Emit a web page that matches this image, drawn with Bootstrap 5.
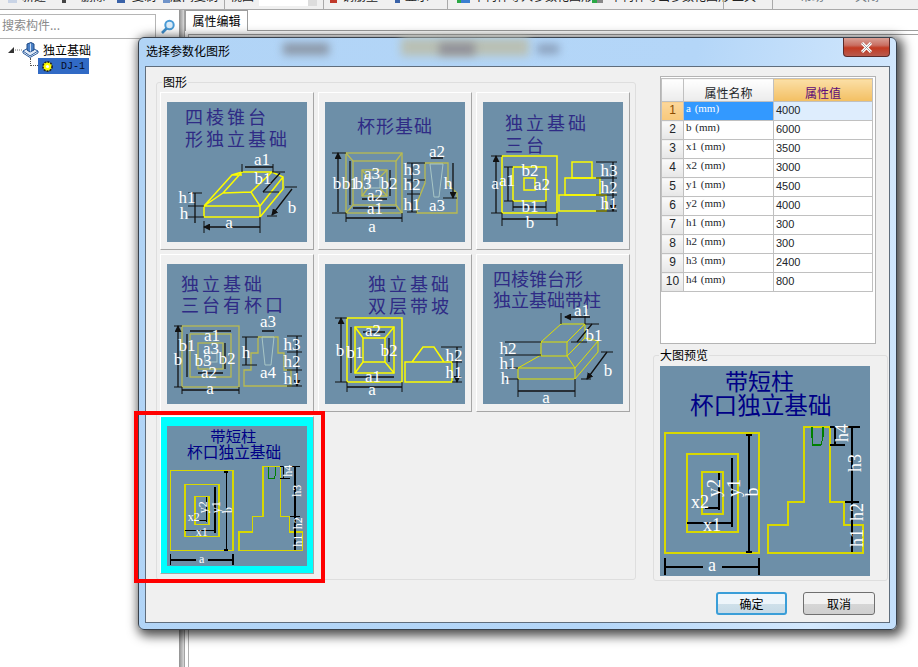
<!DOCTYPE html>
<html lang="zh">

<head>
  <meta charset="UTF-8">
  <title>选择参数化图形</title>
  <link href="https://cdn.jsdelivr.net/npm/bootstrap@5.3.2/dist/css/bootstrap.min.css" rel="stylesheet" />
  <style>
    html, body { height: 100%; overflow: hidden; background: #fff; }
    body { font: 12px "Noto Sans CJK SC", "Liberation Sans", sans-serif; color: #000; }
    .app { height: 667px; }

    /* toolbar, only its lower edge is in the shot */
    .tbar { height: 10px; background: #f0f0f0; border-bottom: 1px solid #a9a9a9; overflow: hidden; align-items: flex-end; }
    .tb-txt { flex: none; height: 22px; line-height: 18px; padding-bottom: 4px; color: #222; white-space: nowrap; }
    .tb-sep { flex: none; height: 9px; background: #aaa; }
    .tb-combo { flex: none; height: 6px; background: #fff; align-self: flex-start; }
    .tb-ico { flex: none; height: 3px; align-self: flex-start; }

    .left-pane { width: 179px; flex: none; }
    .search-row { height: 32px; padding-top: 4px; }
    .search-box { width: 156px; height: 25px; border: 1px solid #b5b5b5; border-left: 0; background: #fff; color: #8a8a8a; padding-left: 2px; line-height: 20px; }
    .search-ico { margin-left: 4px; margin-top: 5px; }
    .tree-row { height: 16px; line-height: 16px; white-space: nowrap; }
    .tree-sel { background: #316ac5; width: 51px; height: 16px; padding-left: 3px; gap: 3px; font: 10px "Liberation Mono", monospace; color: #050a20; }
    .tree-link { width: 8px; height: 8px; border-left: 1px dotted #555; border-bottom: 1px dotted #555; margin: 0 0 8px 30px; }
    .gutter { width: 5px; flex: none; background: linear-gradient(90deg, #8f8f8f, #d8d8d8); }
    .right-pane { border-left: 1px solid #a3a3a3; }
    .tab-strip { height: 21px; border-bottom: 1px solid #9d9d9d; }
    .tab-one { width: 63px; height: 21px; border: 1px solid #9d9d9d; border-bottom: 0; background: #fff; text-align: center; line-height: 20px; }
    .sub-line { margin: 3px 0 0 3px; border-top: 1px solid #a0a0a0; border-left: 1px solid #b0b0b0; }

    /* dialog */
    .dlg { left: 138px; top: 37px; width: 759px; height: 593px; border: 1px solid #39424d; border-radius: 6px; background: linear-gradient(100deg, #b1d4f6 0%, #b4d6f8 65%, #d3e8fd 90%, #c3dffb 100%); box-shadow: 3px 3px 11px 3px rgba(0, 0, 0, .7); }
    .dlg-title { height: 28px; line-height: 26px; padding-left: 7px; }
    .blob { position: absolute; filter: blur(4px); }
    .dlg-close { top: 0; right: 6px; width: 47px; height: 19px; border: 1px solid #5b2a2a; border-top: 0; border-radius: 0 0 4px 4px; background: linear-gradient(#d9a096 0%, #c96f62 40%, #c23a22 55%, #b85a4e 100%); }
    .dlg-client { margin: 0 6px; height: 557px; background: #f0f0f0; border: 1px solid #5f6d7c; }
    .grp { position: relative; border: 1px solid #dedede; border-radius: 3px; }
    .grp-label { position: absolute; left: 5px; top: -9px; background: #f0f0f0; padding: 0 1px; line-height: 16px; }
    .shapes { width: 480px; height: 498px; margin: 15px 0 0 10px; padding: 9px 0 0 3px; display: grid; grid-template-columns: repeat(3, 154px); grid-auto-rows: 158px; gap: 4px; }
    .shape-cell { padding: 9px 0 0 6px; background: #f0f0f0; border: 1px solid; border-color: #fff #a6a6a6 #a6a6a6 #fff; }
    .shape-on { background: #0ff; }
    .pic { display: block; background: #6d8fa8; }
    .side { width: 235px; margin: 9px 0 0 17px; }
    .prop-box { width: 216px; height: 268px; margin-left: 7px; background: #fff; border: 1px solid #b4b4b4; padding-top: 1px; }
    .prop-tb { width: 211px; table-layout: fixed; margin: 0; border-color: #c0c0c0; }
    .prop-tb th, .prop-tb td { padding: 0 2px; height: 19px; line-height: 17px; font-weight: 400; border: 1px solid #c0c0c0; }
    .prop-tb thead th { height: 23px; text-align: center; background: linear-gradient(#fff, #ebebeb); }
    .prop-tb .th-val { background: linear-gradient(#fbdfa6, #f3bf62); color: #5c0a78; }
    .prop-tb .rn { text-align: center; padding: 0; background: linear-gradient(#fafafa, #e6e6e6); font-family: "Liberation Sans", sans-serif; }
    .prop-tb .rn-on { background: linear-gradient(#fcd79b, #f8c87a); color: #8a4b00; }
    .prop-tb .nm { font: 11px "Liberation Serif", serif; word-spacing: 1px; }
    .prop-tb .vl { font: 11px "Liberation Sans", sans-serif; line-height: 17px; }
    .prop-tb .nm-on { background: #39f; color: #fff; }
    .prop-tb .vl-on { background: #deedfd; }
    .preview { height: 226px; margin-top: 11px; padding: 10px 0 0 6px; }
    .dlg-foot { margin-top: 11px; padding-right: 14px; gap: 16px; }
    .btn-aero { width: 72px; height: 23px; padding: 0; font-size: 12px; line-height: 20px; border-radius: 3px; border: 1px solid #707070; background: linear-gradient(#f2f2f2 50%, #d6d6d6 52%, #cfcfcf); color: #000; }
    .btn-aero-on { width: 71px; border: 2px solid #3a9ed8; background: linear-gradient(#eef5fa 50%, #cfe0ea 52%, #c6dae6); }

    .red-mark { left: 134px; top: 411px; width: 191px; height: 172px; border: 4px solid #f00; }

    /* drawings */
    .cap { fill: #2f2b85; font-family: "Noto Sans CJK SC", sans-serif; }
    .cap-n { fill: #000086; font-family: "Noto Sans CJK SC", sans-serif; }
    .lb { fill: #fff; font: 17px "Liberation Serif", serif; text-anchor: middle; dominant-baseline: central; }
    .yl { fill: none; stroke: #fcfc00; stroke-width: 1.5; }
    .yt { fill: none; stroke: #e0e000; stroke-width: 1; }
    .ol { fill: none; stroke: #b9bb50; stroke-width: 1.3; }
    .pl { fill: none; stroke: #a8c6c6; stroke-width: 1; }
    .dm { stroke: #111; stroke-width: 1.3; marker-start: url(#ar); marker-end: url(#ar); }
    .tk { stroke: #111; stroke-width: 1; }
    .ln { stroke: #000; stroke-width: 1.1; vector-effect: non-scaling-stroke; shape-rendering: crispEdges; }
    .yy { fill: none; stroke: #d8d800; stroke-width: 1.1; vector-effect: non-scaling-stroke; shape-rendering: crispEdges; }
    .gn { fill: none; stroke: #008000; stroke-width: 1.1; vector-effect: non-scaling-stroke; shape-rendering: crispEdges; }
    .lr { fill: #fff; font: 18px "Liberation Serif", serif; text-anchor: middle; dominant-baseline: central; }
  </style>
</head>

<body>
  <svg width="0" height="0" class="position-absolute">
    <defs>
      <marker id="ar" markerWidth="7" markerHeight="7" refX="6" refY="3.5" orient="auto-start-reverse" markerUnits="userSpaceOnUse">
        <path d="M0 0L7 3.5L0 7Z" fill="#111" />
      </marker>
      <symbol id="cup-col" viewBox="0 0 210 210">
        <text class="cap-n" x="65" y="24" font-size="23">带短柱</text>
        <text class="cap-n" x="30" y="48" font-size="23.6">杯口独立基础</text>
        <rect class="yy" x="5" y="67" width="94" height="120" />
        <rect class="yy" x="27" y="88" width="51" height="78" />
        <rect class="yy" x="42" y="106" width="21" height="42" />
        <path class="yy" d="M144 61H170V136H184V159H203V187H108V159H128V136H144Z" />
        <path class="gn" d="M152 61V71L153 79H161L163 71V61" />
        <path class="ln" d="M89 69V186M72 92V161M59 107V144M45 142H60M27 157H73M5 201H43M62 201H99M5 192V209M99 192V209M192 61V186M170 61H200M170 79H185M175 61V79M185 136H199M86 69H92M86 186H92" />
        <text class="lr" transform="translate(92 126) rotate(-90)">b</text>
        <text class="lr" transform="translate(74 122) rotate(-90)">y1</text>
        <text class="lr" transform="translate(54 122) rotate(-90)">y2</text>
        <text class="lr" x="40" y="136">x2</text>
        <text class="lr" x="52" y="159">x1</text>
        <text class="lr" x="52" y="199">a</text>
        <text class="lr" transform="translate(182 67) rotate(-90)">h4</text>
        <text class="lr" transform="translate(195 97) rotate(-90)">h3</text>
        <text class="lr" transform="translate(197 146) rotate(-90)">h2</text>
        <text class="lr" transform="translate(197 172) rotate(-90)">h1</text>
      </symbol>
    </defs>
  </svg>

  <div class="app d-flex flex-column">
    <div class="tbar d-flex" id="toolBar"></div>
    <div class="d-flex flex-grow-1">
      <div class="left-pane">
        <div class="search-row d-flex">
          <div class="search-box">搜索构件...</div>
          <svg class="search-ico" width="16" height="16" viewBox="0 0 16 16">
            <circle cx="9.5" cy="6" r="4.2" fill="#dcecf9" stroke="#4a9bd6" stroke-width="2" />
            <path d="M6.5 9.5L2 14" stroke="#3f8fcc" stroke-width="2.6" />
          </svg>
        </div>
        <div class="tree-row d-flex align-items-center">
          <svg class="ms-2" width="14" height="16" viewBox="0 0 14 16">
            <path d="M0 11H6V5Z" fill="#333" />
            <path d="M7 8H14" stroke="#777" stroke-dasharray="1 1" />
          </svg>
          <svg width="17" height="16" viewBox="0 0 17 16">
            <path d="M1 9L8 5L16 9L8 14Z" fill="#e2ebf7" stroke="#2b5c9e" />
            <path d="M1 9V11L8 15.5L16 11V9" fill="none" stroke="#2b5c9e" />
            <path d="M5 2L9 0.5L12 2V8L8 10L5 8Z" fill="#4a80c6" stroke="#1f4a85" />
            <path d="M8.5 1.5V9.5" stroke="#cfe0f5" />
          </svg>
          <span class="ms-1">独立基础</span>
        </div>
        <div class="d-flex">
          <div class="tree-link"></div>
          <div class="tree-sel d-flex align-items-center">
            <svg width="13" height="13" viewBox="0 0 13 13">
              <circle cx="6.5" cy="6.5" r="4.6" fill="#ff0" stroke="#222" stroke-width="1.6" stroke-dasharray="2 1" />
              <circle cx="6.5" cy="6.5" r="1.6" fill="#fff" />
            </svg>
            <span class="ms-1">DJ-1</span>
          </div>
        </div>
      </div>
      <div class="gutter"></div>
      <div class="right-pane flex-grow-1 d-flex flex-column">
        <div class="tab-strip"><div class="tab-one">属性编辑</div></div>
        <div class="sub-line flex-grow-1"></div>
      </div>
    </div>
  </div>

  <div class="dlg position-absolute">
    <div class="dlg-title position-relative">选择参数化图形
      <span class="blob" style="left:144px;top:5px;width:46px;height:12px;background:#8c98a8"></span>
      <span class="blob" style="left:262px;top:0;width:128px;height:18px;background:#b9c0b4"></span>
      <span class="blob" style="left:300px;top:5px;width:36px;height:12px;background:#8f8f98"></span>
      <span class="blob" style="left:398px;top:6px;width:22px;height:10px;background:#8ba0bb"></span>
      <div class="dlg-close position-absolute d-flex justify-content-center align-items-center">
        <svg width="13" height="11" viewBox="0 0 13 11">
          <path d="M2 1L11 10M11 1L2 10" stroke="#fff" stroke-width="3" />
          <path d="M2 1L11 10M11 1L2 10" stroke="#666" stroke-width=".6" />
        </svg>
      </div>
    </div>
    <div class="dlg-client">
      <div class="d-flex">
        <div class="grp shapes">
          <span class="grp-label">图形</span>

          <div class="shape-cell">
            <svg class="pic" width="140" height="140" viewBox="0 0 140 140">
              <text class="cap" x="18" y="22" font-size="18" letter-spacing="3">四棱锥台</text>
              <text class="cap" x="18" y="44" font-size="18" letter-spacing="3">形独立基础</text>
              <path class="yl" d="M37 104H93V115H37ZM37 104L65 73L75 70H105L116 75V87L93 115M93 104L116 75M93 104L84 90L56 91L37 104M84 90L105 70M56 91L75 70M65 73H75" />
              <path class="dm" d="M37 125H93M28 91V104M28 104V121M78 65H106M113 71L96 90M125 87L105 113" />
              <path class="tk" d="M37 119V131M93 115V131M21 91H35M21 104H37M21 115H37M75 62V70M106 62V70M105 70H118M96 90H112M118 85H130M100 114H110" />
              <text class="lb" x="95" y="57">a1</text><text class="lb" x="96" y="76">b1</text>
              <text class="lb" x="20" y="95">h1</text><text class="lb" x="17" y="111">h</text>
              <text class="lb" x="62" y="120">a</text><text class="lb" x="125" y="105">b</text>
            </svg>
          </div>

          <div class="shape-cell">
            <svg class="pic" width="140" height="140" viewBox="0 0 140 140">
              <text class="cap" x="32" y="31" font-size="18" letter-spacing="1">杯形基础</text>
              <rect class="ol" x="21" y="51" width="56" height="60" />
              <rect class="ol" x="28" y="59" width="43" height="44" />
              <rect class="ol" x="37" y="68" width="25" height="26" />
              <rect class="pl" x="43" y="75" width="12" height="11" />
              <path class="ol" d="M21 51L28 59M77 51L71 59M21 111L28 103M77 111L71 103M37 68L43 75M62 68L55 75M37 94L43 86M62 94L55 86" />
              <path class="ol" d="M100 61H123V83L132 91V111H92V101L100 81Z" />
              <path class="pl" d="M105 62H118L114 95H109Z" />
              <path class="dm" d="M13 51V110M25 59V103M21 116H77M28 106H71M37 97H62M65 68V94M106 56H118M87 61V78M87 78V92M87 92V110M128 61V96" />
              <path class="tk" d="M21 111V120M77 111V120M7 51H21M7 111H21M82 61H100M82 78H100M82 92H95M82 110H92M118 96H132" />
              <text class="lb" x="12" y="81">b</text><text class="lb" x="21" y="81">b</text><text class="lb" x="29" y="81">1</text>
              <text class="lb" x="38" y="81">b3</text><text class="lb" x="64" y="81">b2</text>
              <text class="lb" x="47" y="71">a3</text><text class="lb" x="50" y="93">a2</text>
              <text class="lb" x="50" y="106">a1</text><text class="lb" x="47" y="124">a</text>
              <text class="lb" x="112" y="49">a2</text><text class="lb" x="87" y="67">h3</text>
              <text class="lb" x="87" y="82">h2</text><text class="lb" x="87" y="102">h1</text>
              <text class="lb" x="123" y="81">h</text><text class="lb" x="112" y="103">a3</text>
            </svg>
          </div>

          <div class="shape-cell">
            <svg class="pic" width="140" height="140" viewBox="0 0 140 140">
              <text class="cap" x="22" y="28" font-size="18" letter-spacing="3">独立基础</text>
              <text class="cap" x="22" y="50" font-size="18" letter-spacing="3">三台</text>
              <rect class="yl" x="19" y="54" width="55" height="57" />
              <rect class="yl" x="30" y="65" width="33" height="34" />
              <rect class="yl" x="41" y="76" width="11" height="12" />
              <rect class="yl" x="76" y="93" width="47" height="16" />
              <rect class="yl" x="82" y="76" width="35" height="17" />
              <rect class="yl" x="89" y="60" width="20" height="16" />
              <path class="dm" d="M13 54V111M25 65V99M19 117H74M30 105H63M130 60V76M130 76V93M130 93V109" />
              <path class="tk" d="M19 111V124M74 111V124M30 99V109M63 99V109M8 54H19M8 111H19M21 65H30M21 99H30M113 60H134M113 76H134M113 93H134M113 109H134" />
              <text class="lb" x="12" y="81">a</text><text class="lb" x="24" y="78">a1</text>
              <text class="lb" x="47" y="68">b2</text><text class="lb" x="59" y="82">a2</text>
              <text class="lb" x="47" y="104">b1</text><text class="lb" x="47" y="120">b</text>
              <text class="lb" x="126" y="68">h3</text><text class="lb" x="126" y="85">h2</text><text class="lb" x="126" y="101">h1</text>
            </svg>
          </div>

          <div class="shape-cell">
            <svg class="pic" width="140" height="140" viewBox="0 0 140 140">
              <text class="cap" x="14" y="27" font-size="18" letter-spacing="3">独立基础</text>
              <text class="cap" x="14" y="48" font-size="18" letter-spacing="3">三台有杯口</text>
              <rect class="ol" x="15" y="62" width="57" height="61" />
              <rect class="ol" x="23" y="70" width="41" height="43" />
              <rect class="ol" x="31" y="79" width="25" height="26" />
              <rect class="pl" x="38" y="88" width="12" height="10" />
              <path class="ol" d="M91 73H111V89H117V106H124V122H77V106H84V89H91Z" />
              <path class="pl" d="M95 73H107L104 101H98Z" />
              <path class="dm" d="M11 62V123M20 70V113M15 126H72M23 67H64M31 109H56M58 79V105M95 67H107M79 73V101M130 72V88M130 88V106M130 106V122" />
              <path class="tk" d="M15 123V130M72 123V130M7 62H15M7 123H15M75 73H91M75 101H90M120 72H135M120 88H135M120 106H135M120 122H135" />
              <text class="lb" x="45" y="71">a1</text><text class="lb" x="44" y="84">a3</text>
              <text class="lb" x="20" y="81">b1</text><text class="lb" x="11" y="95">b</text>
              <text class="lb" x="36" y="96">b3</text><text class="lb" x="60" y="94">b2</text>
              <text class="lb" x="42" y="108">a2</text><text class="lb" x="43" y="124">a</text>
              <text class="lb" x="101" y="57">a3</text><text class="lb" x="79" y="88">h</text>
              <text class="lb" x="101" y="108">a4</text><text class="lb" x="125" y="80">h3</text>
              <text class="lb" x="125" y="97">h2</text><text class="lb" x="125" y="114">h1</text>
            </svg>
          </div>

          <div class="shape-cell">
            <svg class="pic" width="140" height="140" viewBox="0 0 140 140">
              <text class="cap" x="43" y="27" font-size="18" letter-spacing="3">独立基础</text>
              <text class="cap" x="43" y="49" font-size="18" letter-spacing="3">双层带坡</text>
              <rect class="yl" x="22" y="54" width="55" height="64" />
              <rect class="yl" x="30" y="63" width="39" height="46" />
              <rect class="yl" x="38" y="74" width="22" height="24" />
              <path class="yl" d="M30 63L38 74M69 63L60 74M30 109L38 98M69 109L60 98M80 98H127V118H80ZM87 98L98 83H109L119 98" />
              <path class="dm" d="M16 54V118M26 63V109M22 123H77M30 113H69M38 68H60M64 74V98M132 83V98M132 98V118" />
              <path class="tk" d="M22 118V128M77 118V128M10 54H22M10 118H22M116 83H137M127 98H137M127 118H137" />
              <text class="lb" x="48" y="66">a2</text><text class="lb" x="15" y="86">b</text>
              <text class="lb" x="30" y="88">b1</text><text class="lb" x="64" y="86">b2</text>
              <text class="lb" x="48" y="112">a1</text><text class="lb" x="47" y="125">a</text>
              <text class="lb" x="129" y="91">h2</text><text class="lb" x="129" y="108">h1</text>
            </svg>
          </div>

          <div class="shape-cell">
            <svg class="pic" width="140" height="140" viewBox="0 0 140 140">
              <text class="cap" x="10" y="22" font-size="18">四棱锥台形</text>
              <text class="cap" x="10" y="43" font-size="18">独立基础带柱</text>
              <path class="yt" d="M35 104H92V115H35ZM58 78H84V92H58ZM58 78L78 60H102L84 78M102 60V74L84 92M35 104L58 91M84 92L92 104M102 74L115 77V88L92 115M92 104L115 77" />
              <path class="dm" d="M82 53H107M109 60L94 78M35 127H92M124 88L104 115" />
              <path class="tk" d="M35 115V133M92 115V133M78 49V60M102 49V60M102 60H116M88 78H104M118 88H130M98 115H108M22 78H58M22 91H58M22 104H35M22 115H35" />
              <text class="lb" x="99" y="46">a1</text><text class="lb" x="111" y="71">b1</text>
              <text class="lb" x="25" y="84">h2</text><text class="lb" x="25" y="99">h1</text>
              <text class="lb" x="22" y="114">h</text><text class="lb" x="63" y="133">a</text>
              <text class="lb" x="125" y="106">b</text>
            </svg>
          </div>

          <div class="shape-cell shape-on">
            <svg class="pic" width="140" height="140"><use href="#cup-col" width="140" height="140" /></svg>
          </div>
        </div>

        <div class="side">
          <div class="prop-box">
            <table class="table table-bordered prop-tb">
              <colgroup><col style="width:22px"><col style="width:90px"><col style="width:99px"></colgroup>
              <thead><tr><th></th><th>属性名称</th><th class="th-val">属性值</th></tr></thead>
              <tbody id="propRows"></tbody>
            </table>
          </div>
          <div class="grp preview">
            <span class="grp-label">大图预览</span>
            <svg class="pic" width="210" height="210"><use href="#cup-col" width="210" height="210" /></svg>
          </div>
        </div>
      </div>
      <div class="dlg-foot d-flex justify-content-end">
        <button class="btn btn-aero btn-aero-on">确定</button>
        <button class="btn btn-aero">取消</button>
      </div>
    </div>
  </div>

  <div class="red-mark position-absolute"></div>

  <script>
    // left edge, width, kind, text or colour
    const tools = [
      [8, 9, 'ico', '#c9d4e6'], [22, 24, 'txt', '新建'], [62, 4, 'ico', '#444'], [81, 24, 'txt', '删除'],
      [117, 8, 'ico', '#3a62a8'], [132, 24, 'txt', '复制'], [163, 7, 'ico', '#6f93c9'], [170, 48, 'txt', '层间复制'],
      [224, 1, 'sep'], [230, 24, 'txt', '视图'], [259, 49, 'combo', '#fff'], [308, 9, 'combo', '#ddd'], [323, 1, 'sep'],
      [330, 7, 'ico', '#c0392b'], [342, 36, 'txt', '钢筋量'], [395, 5, 'ico', '#3a62a8'], [405, 24, 'txt', '显示'],
      [447, 1, 'sep'], [457, 4, 'ico', '#2aa845'], [461, 9, 'ico', '#3a7fd0'], [473, 108, 'txt', '单构件导入参数化图形'],
      [592, 5, 'ico', '#2aa845'], [597, 6, 'ico', '#888'], [610, 108, 'txt', '单构件导出参数化图形'],
      [723, 1, 'sep'], [732, 24, 'txt', '工具'], [772, 1, 'sep'], [800, 24, 'grey', '帮助'], [855, 24, 'grey', '关闭']
    ];
    const bar = document.getElementById('toolBar');
    let edge = 0;
    tools.forEach(([left, width, kind, val]) => {
      const el = document.createElement('span');
      el.style.marginLeft = (left - edge) + 'px';
      el.style.width = width + 'px';
      edge = left + width;
      if (kind === 'txt' || kind === 'grey') {
        el.className = 'tb-txt' + (kind === 'grey' ? ' text-secondary' : '');
        el.textContent = val;
      } else {
        el.className = 'tb-' + kind;
        if (val) el.style.background = val;
      }
      bar.appendChild(el);
    });

    const props = [
      ['a(mm)', '4000'], ['b(mm)', '6000'], ['x1(mm)', '3500'], ['x2(mm)', '3000'], ['y1(mm)', '4500'],
      ['y2(mm)', '4000'], ['h1(mm)', '300'], ['h2(mm)', '300'], ['h3(mm)', '2400'], ['h4(mm)', '800']
    ];
    const rows = document.getElementById('propRows');
    props.forEach((p, i) => {
      const tr = document.createElement('tr');
      const on = i === 0;
      tr.innerHTML = `<td class="rn ${on ? 'rn-on' : ''}">${i + 1}</td>` +
        `<td class="nm ${on ? 'nm-on' : ''}">${p[0].replace('(', ' (')}</td>` +
        `<td class="vl ${on ? 'vl-on' : ''}">${p[1]}</td>`;
      rows.appendChild(tr);
    });
  </script>
  <script src="https://cdn.jsdelivr.net/npm/bootstrap@5.3.2/dist/js/bootstrap.bundle.min.js"></script>
</body>

</html>
